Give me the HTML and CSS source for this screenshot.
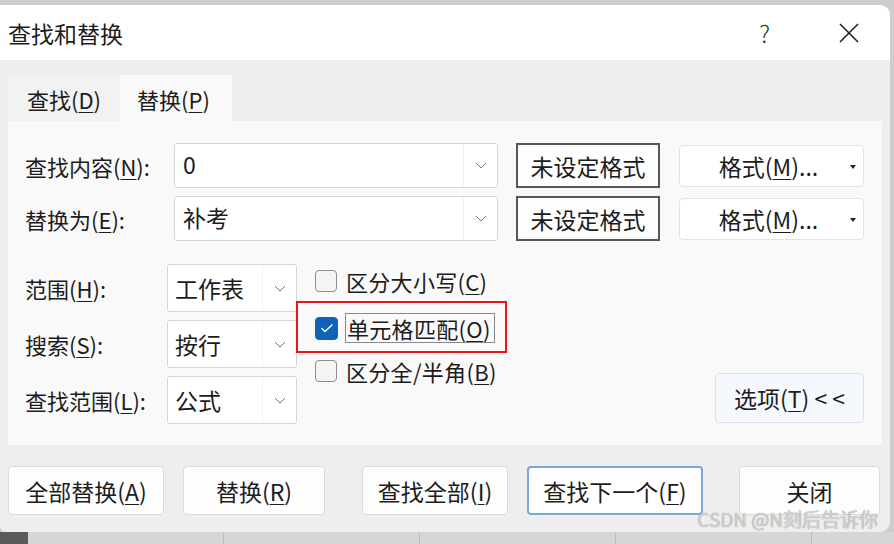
FILE: index.html
```html
<!DOCTYPE html>
<html lang="zh-CN">
<head>
  <meta charset="UTF-8" />
  <title>查找和替换</title>
  <link rel="stylesheet" href="styles.css">
</head>
<body>
  <div class="window">
    <div class="titlebar">
      <span class="title">查找和替换</span>
      <span class="help">?</span>
      <svg class="close" width="20" height="20" viewBox="0 0 20 20">
        <path d="M1 1 L19 19 M19 1 L1 19" stroke="#222" stroke-width="1.6" fill="none"/>
      </svg>
    </div>

    <div class="content">
      <div class="tabs">
        <div class="tab">查找(<u>D</u>)</div>
        <div class="tab active">替换(<u>P</u>)</div>
      </div>

      <div class="panel">
        <div class="row">
          <span class="lbl">查找内容(<u>N</u>):</span>
          <div class="combo">
            <span class="val">0</span>
            <span class="drop"><svg width="12" height="7" viewBox="0 0 12 7"><path d="M1 1 L6 6 L11 1" stroke="#777" stroke-width="1" fill="none"/></svg></span>
          </div>
          <button class="fmt-none">未设定格式</button>
          <button class="fmt">格式(<u>M</u>)...<span class="caret"></span></button>
        </div>
        <div class="row">
          <span class="lbl">替换为(<u>E</u>):</span>
          <div class="combo">
            <span class="val">补考</span>
            <span class="drop"><svg width="12" height="7" viewBox="0 0 12 7"><path d="M1 1 L6 6 L11 1" stroke="#777" stroke-width="1" fill="none"/></svg></span>
          </div>
          <button class="fmt-none">未设定格式</button>
          <button class="fmt">格式(<u>M</u>)...<span class="caret"></span></button>
        </div>

        <div class="options">
          <div class="opt-left">
            <div class="opt-row">
              <span class="lbl short">范围(<u>H</u>):</span>
              <div class="select"><span class="val">工作表</span><span class="drop"><svg width="12" height="7" viewBox="0 0 12 7"><path d="M1 1 L6 6 L11 1" stroke="#777" stroke-width="1" fill="none"/></svg></span></div>
            </div>
            <div class="opt-row">
              <span class="lbl short">搜索(<u>S</u>):</span>
              <div class="select"><span class="val">按行</span><span class="drop"><svg width="12" height="7" viewBox="0 0 12 7"><path d="M1 1 L6 6 L11 1" stroke="#777" stroke-width="1" fill="none"/></svg></span></div>
            </div>
            <div class="opt-row">
              <span class="lbl short">查找范围(<u>L</u>):</span>
              <div class="select"><span class="val">公式</span><span class="drop"><svg width="12" height="7" viewBox="0 0 12 7"><path d="M1 1 L6 6 L11 1" stroke="#777" stroke-width="1" fill="none"/></svg></span></div>
            </div>
          </div>

          <div class="checks">
            <div class="check">
              <span class="box"></span>
              <span class="text">区分大小写(<u>C</u>)</span>
            </div>
            <div class="check second">
              <span class="box checked"><svg width="14" height="10" viewBox="0 0 14 10"><path d="M1.5 5 L5 8.5 L12.5 1.5" stroke="#fff" stroke-width="1.4" fill="none"/></svg></span>
              <span class="text focus">单元格匹配(<u>O</u>)</span>
              <span class="mark"></span>
            </div>
            <div class="check third">
              <span class="box"></span>
              <span class="text">区分全/半角(<u>B</u>)</span>
            </div>
          </div>

          <button class="opt-btn">选项(<u>T</u>) &lt; &lt;</button>
        </div>
      </div>

      <div class="actions">
        <button class="act w1">全部替换(<u>A</u>)</button>
        <button class="act w2">替换(<u>R</u>)</button>
        <button class="act w3">查找全部(<u>I</u>)</button>
        <button class="act w4 default">查找下一个(<u>F</u>)</button>
        <button class="act w5">关闭</button>
      </div>
    </div>

    <div class="watermark">CSDN @N刻后告诉你</div>
  </div>

  <div class="strip">
    <span class="cell dark"></span>
    <span class="cell c1"></span>
    <span class="cell c2"></span>
    <span class="cell c3"></span>
    <span class="cell c4"></span>
  </div>
</body>
</html>
```

FILE: styles.css
```css
body {
  margin: 0;
  background: #cdcdcd;
  font-family: "Noto Sans CJK SC", "Noto Sans", sans-serif;
  color: #1c1c1c;
  width: 894px;
  height: 544px;
  overflow: hidden;
}
button {
  font-family: inherit;
  color: inherit;
}
u {
  text-underline-offset: 3px;
  text-decoration-thickness: 1px;
}
.window {
  position: relative;
  width: 890px;
  height: 527px;
  margin-top: 5px;
  background: #eeeeee;
  border-radius: 0 10px 10px 6px;
  overflow: hidden;
}
.titlebar {
  height: 55px;
  background: #ffffff;
  display: flex;
  align-items: center;
  padding-left: 8px;
}
.title {
  font-size: 23px;
  flex: 1;
}
.help {
  font-size: 24px;
  font-weight: 300;
  margin-right: 69px;
  color: #333;
}
.close {
  margin-right: 31px;
}
.content {
  padding: 17px 8px 0 8px;
}
.tabs {
  display: flex;
  height: 44px;
  align-items: flex-end;
}
.tab {
  width: 112px;
  height: 44px;
  box-sizing: border-box;
  padding-left: 19px;
  font-size: 22px;
  line-height: 44px;
  background: #f2f2f2;
}
.tab.active {
  height: 46px;
  line-height: 48px;
  padding-left: 17px;
  background: #f9f9f9;
}
.panel {
  height: 324px;
  box-sizing: border-box;
  background: #f9f9f9;
  padding: 22px 18px 0 17px;
}
.row {
  display: flex;
  align-items: center;
  height: 45px;
  margin-bottom: 8px;
}
.lbl {
  width: 149px;
  font-size: 22px;
  flex-shrink: 0;
}
.lbl.short {
  width: 142px;
}
.combo, .select {
  display: flex;
  align-items: center;
  box-sizing: border-box;
  background: #fff;
  border: 1px solid #d5d5d5;
  border-radius: 3px;
  font-size: 23px;
}
.combo {
  width: 324px;
  height: 45px;
}
.select {
  width: 130px;
  height: 48px;
}
.val {
  flex: 1;
  padding-left: 8px;
  white-space: nowrap;
}
.combo .val {
  margin-top: -4px;
}
.select .val {
  padding-left: 7px;
}
.drop {
  width: 33px;
  height: 100%;
  display: flex;
  align-items: center;
  justify-content: center;
  border-left: 1px solid #f1f1f1;
  flex-shrink: 0;
}
.fmt-none {
  width: 144px;
  height: 45px;
  margin-left: 18px;
  background: #fdfdfd;
  border: 2px solid #575757;
  font-size: 23px;
  padding: 0;
}
.fmt {
  position: relative;
  width: 185px;
  height: 42px;
  margin-left: 19px;
  background: #fff;
  border: 1px solid #e2e2e2;
  border-radius: 4px;
  font-size: 23px;
  padding: 0 6px 0 0;
}
.caret {
  position: absolute;
  right: 7px;
  top: 19px;
  border-left: 3px solid transparent;
  border-right: 3px solid transparent;
  border-top: 4px solid #222;
}
.options {
  display: flex;
  margin-top: 23px;
  height: 160px;
}
.opt-left {
  display: flex;
  flex-direction: column;
  gap: 8px;
}
.opt-row {
  display: flex;
  align-items: center;
  height: 48px;
}
.checks {
  margin-left: 18px;
  display: flex;
  flex-direction: column;
}
.check {
  position: relative;
  display: flex;
  align-items: center;
  height: 34px;
  font-size: 22px;
  white-space: nowrap;
  letter-spacing: 0.3px;
}
.check.second {
  margin-top: 13px;
}
.check.third {
  margin-top: 9px;
}
.box {
  width: 22px;
  height: 22px;
  box-sizing: border-box;
  border: 1px solid #8d8d8d;
  border-radius: 4px;
  background: #f4f4f4;
  margin-right: 9px;
  display: flex;
  align-items: center;
  justify-content: center;
  flex-shrink: 0;
}
.box.checked {
  width: 23px;
  height: 23px;
  background: #0f62b8;
  border-color: #0f62b8;
  margin-right: 7px;
}
.text.focus {
  border: 1px solid #8a8a8a;
  padding: 0 3px 0 1px;
  line-height: 28px;
}
.mark {
  position: absolute;
  left: -19px;
  top: -10px;
  width: 211px;
  height: 52px;
  box-sizing: border-box;
  border: 2px solid #e8141c;
}
.opt-btn {
  margin-left: auto;
  align-self: flex-end;
  margin-bottom: 1px;
  width: 149px;
  height: 50px;
  background: #f5f8fc;
  border: 1px solid #dde1e6;
  border-radius: 4px;
  font-size: 23px;
  padding: 0;
}
.actions {
  display: flex;
  margin-top: 21px;
}
.act {
  height: 49px;
  background: #fdfdfd;
  border: 1px solid #dadada;
  border-radius: 4px;
  font-size: 23px;
  padding: 0;
}
.w1 { width: 156px; }
.w2 { width: 142px; margin-left: 19px; }
.w3 { width: 146px; margin-left: 37px; }
.w4 { width: 176px; margin-left: 19px; }
.w5 { width: 141px; margin-left: 36px; }
.act.default {
  background: #fff;
  border: 2px solid #79a8dc;
}
.watermark {
  position: absolute;
  right: 12px;
  bottom: 0;
  font-size: 19px;
  color: #d2d2d2;
  text-shadow: 0 0 1px #8a8a8a;
}
.strip {
  display: flex;
  height: 12px;
  background: #d6d6d6;
}
.cell {
  height: 100%;
  border-right: 1px solid #bdbdbd;
}
.cell.dark { width: 28px; background: #5a5a5a; border: none; }
.c1 { width: 195px; }
.c2 { width: 195px; }
.c3 { width: 195px; }
.c4 { width: 195px; }
```
